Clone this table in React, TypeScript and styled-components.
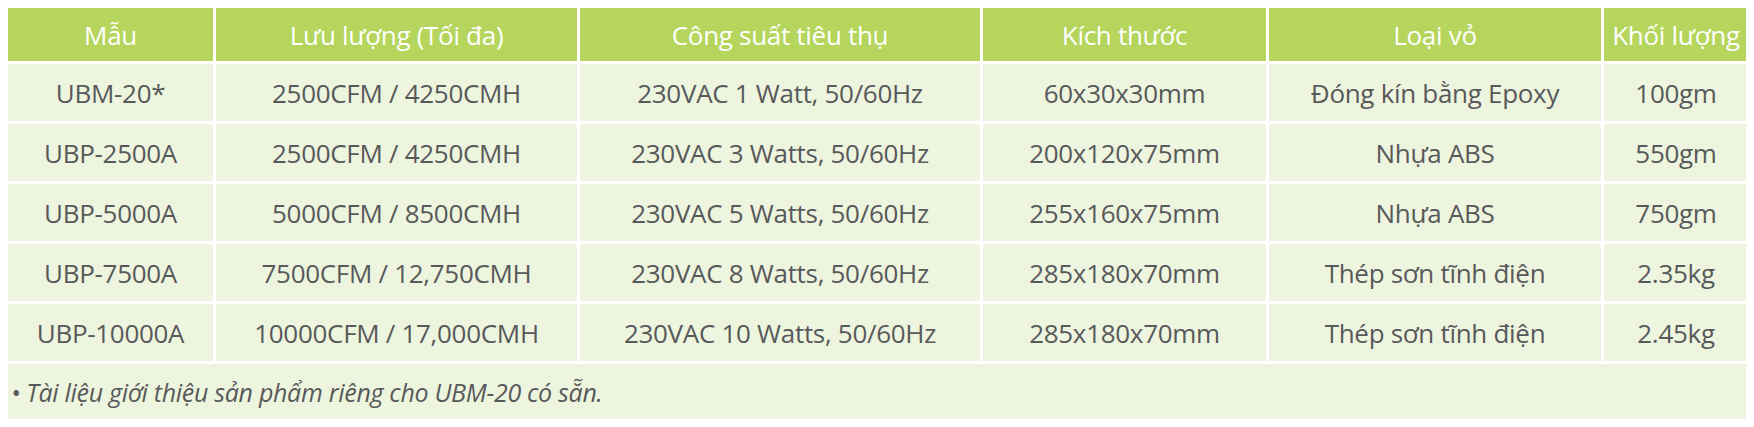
import React from 'react';
import styled, { createGlobalStyle } from 'styled-components';

const GlobalStyle = createGlobalStyle`
  body {
    margin: 8px;
    background: #ffffff;
    font-family: 'Open Sans', 'Noto Sans', sans-serif;
  }
`;

const headers = [
  'Mẫu',
  'Lưu lượng (Tối đa)',
  'Công suất tiêu thụ',
  'Kích thước',
  'Loại vỏ',
  'Khối lượng',
];

const rows = [
  ['UBM-20*', '2500CFM / 4250CMH', '230VAC 1 Watt, 50/60Hz', '60x30x30mm', 'Đóng kín bằng Epoxy', '100gm'],
  ['UBP-2500A', '2500CFM / 4250CMH', '230VAC 3 Watts, 50/60Hz', '200x120x75mm', 'Nhựa ABS', '550gm'],
  ['UBP-5000A', '5000CFM / 8500CMH', '230VAC 5 Watts, 50/60Hz', '255x160x75mm', 'Nhựa ABS', '750gm'],
  ['UBP-7500A', '7500CFM / 12,750CMH', '230VAC 8 Watts, 50/60Hz', '285x180x70mm', 'Thép sơn tĩnh điện', '2.35kg'],
  ['UBP-10000A', '10000CFM / 17,000CMH', '230VAC 10 Watts, 50/60Hz', '285x180x70mm', 'Thép sơn tĩnh điện', '2.45kg'],
];

export default function App() {
  return (
    <>
      <GlobalStyle />
      <Table>
        {headers.map((h) => (
          <HeadCell key={h}>{h}</HeadCell>
        ))}
        {rows.map((row) =>
          row.map((cell, i) => <Cell key={row[0] + i}>{cell}</Cell>)
        )}
        <Note>• Tài liệu giới thiệu sản phẩm riêng cho UBM-20 có sẵn.</Note>
      </Table>
    </>
  );
}

const Table = styled.div`
  display: grid;
  grid-template-columns: 205px 361px 400px 283px 332px 144px;
  grid-template-rows: 53px repeat(5, 57px) 55px;
  gap: 3px;
  width: 1740px;
`;

const HeadCell = styled.div`
  display: flex;
  align-items: center;
  justify-content: center;
  background: #b5d55c;
  color: #ffffff;
  font-size: 26px;
  letter-spacing: -0.3px;
  white-space: nowrap;
`;

const Cell = styled.div`
  display: flex;
  align-items: center;
  justify-content: center;
  background: #eef5de;
  color: #58595b;
  font-size: 26px;
  letter-spacing: -0.3px;
  white-space: nowrap;
`;

const Note = styled.div`
  grid-column: 1 / -1;
  display: flex;
  align-items: center;
  padding-left: 3px;
  background: #eef5de;
  color: #58595b;
  font-size: 25px;
  font-style: italic;
  letter-spacing: -0.3px;
`;
